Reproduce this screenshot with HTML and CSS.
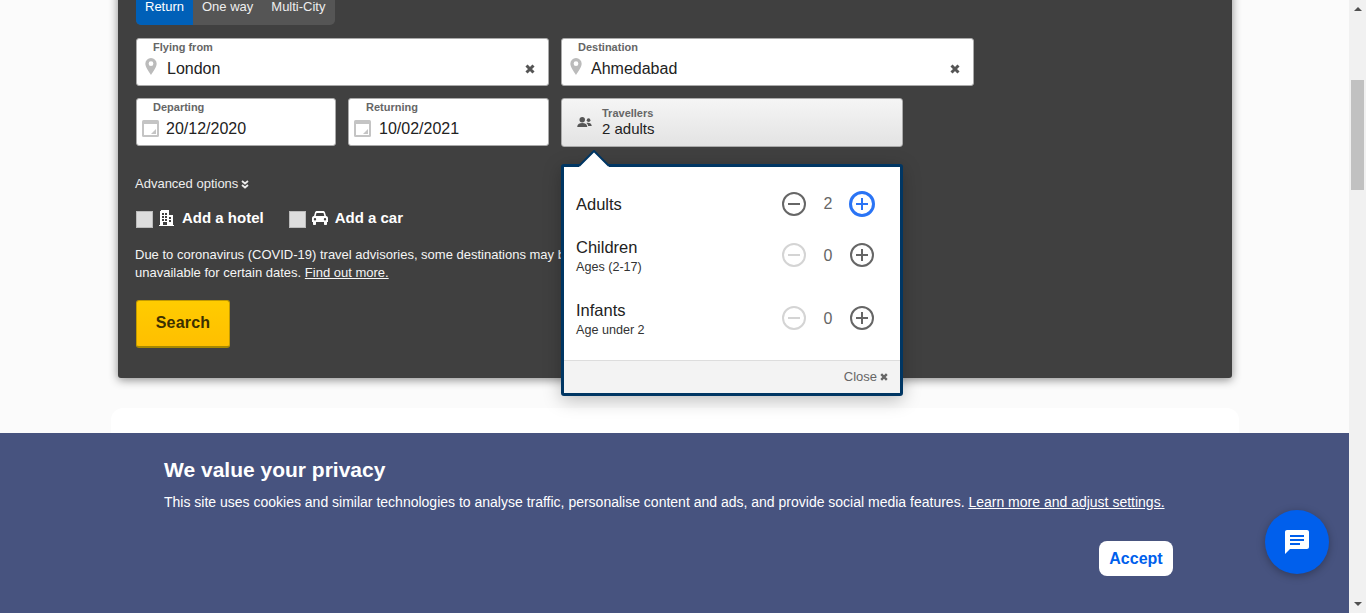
FILE: index.html
```html
<!DOCTYPE html>
<html lang="en">
<head>
    <meta charset="UTF-8">
    <title>Flight search</title>
    <link rel="stylesheet" href="styles.css">
</head>
<body>
    <div class="page">
        <div class="main">
            <form class="panel">
                <div class="tabs">
                    <span class="tab selected">Return</span>
                    <span class="tab">One way</span>
                    <span class="tab">Multi-City</span>
                </div>
                <div class="fields">
                    <div class="field">
                        <label>Flying from</label>
                        <div class="value">
                            <svg class="pin" viewBox="0 0 12 18"><path fill="#bbb" fill-rule="evenodd" d="M6 0a6 6 0 0 0-6 6c0 3.500 4 8.500 6 12 2-3.500 6-8.500 6-12a6 6 0 0 0-6-6zm0 3.500a2.500 2.500 0 1 1 0 5 2.500 2.500 0 0 1 0-5z"/></svg>
                            <span class="text">London</span>
                            <svg class="clear" viewBox="0 0 10 10"><path stroke="#555" stroke-width="3" d="M1.500 1.500l7 7M8.500 1.500l-7 7"/></svg>
                        </div>
                    </div>
                    <div class="field">
                        <label>Destination</label>
                        <div class="value">
                            <svg class="pin" viewBox="0 0 12 18"><path fill="#bbb" fill-rule="evenodd" d="M6 0a6 6 0 0 0-6 6c0 3.500 4 8.500 6 12 2-3.500 6-8.500 6-12a6 6 0 0 0-6-6zm0 3.500a2.500 2.500 0 1 1 0 5 2.500 2.500 0 0 1 0-5z"/></svg>
                            <span class="text dest">Ahmedabad</span>
                            <svg class="clear" viewBox="0 0 10 10"><path stroke="#555" stroke-width="3" d="M1.500 1.500l7 7M8.500 1.500l-7 7"/></svg>
                        </div>
                    </div>
                    <div class="dates">
                        <div class="field">
                            <label>Departing</label>
                            <div class="value">
                                <svg class="cal" viewBox="0 0 17 17"><rect width="17" height="17" rx="1.500" fill="#c4c4c4"/><rect x="2" y="4" width="13" height="11" fill="#fff"/><path fill="#c4c4c4" d="M14 9v5H9z"/></svg>
                                <span class="text">20/12/2020</span>
                            </div>
                        </div>
                        <div class="field">
                            <label>Returning</label>
                            <div class="value">
                                <svg class="cal" viewBox="0 0 17 17"><rect width="17" height="17" rx="1.500" fill="#c4c4c4"/><rect x="2" y="4" width="13" height="11" fill="#fff"/><path fill="#c4c4c4" d="M14 9v5H9z"/></svg>
                                <span class="text">10/02/2021</span>
                            </div>
                        </div>
                    </div>
                    <div class="travellers">
                        <svg class="users" viewBox="0 0 16 11"><circle cx="5.500" cy="3" r="3" fill="#555"/><path fill="#555" d="M0 11c0-3 2-4.500 5.500-4.500S11 8 11 11z"/><circle cx="12.500" cy="3.500" r="2" fill="#555"/><path fill="#555" d="M10 6.500c3-.7 6 .5 6 3.500h-4c0-1.500-1-2.700-2-3.500z"/></svg>
                        <div>
                            <label>Travellers</label>
                            <div class="text">2 adults</div>
                        </div>
                        <div class="popup">
                            <svg class="arrow" viewBox="0 0 36 18"><path fill="#fff" d="M3 18v-2L18 1l15 15v2z"/><path fill="none" stroke="#003663" stroke-width="2" d="M3 16L18 1l15 15"/></svg>
                            <div class="rows">
                                <div class="row adults">
                                    <div class="who"><div class="name">Adults</div></div>
                                    <span class="step"><svg viewBox="0 0 24 24"><circle cx="12" cy="12" r="11" fill="none" stroke="#666" stroke-width="2"/><path stroke="#666" stroke-width="2" d="M6 12h12"/></svg></span>
                                    <span class="count">2</span>
                                    <span class="step focus"><svg viewBox="0 0 26 26"><circle cx="13" cy="13" r="11.500" fill="none" stroke="#2a74f5" stroke-width="3"/><path stroke="#2a74f5" stroke-width="2" d="M7 13h12M13 7v12"/></svg></span>
                                </div>
                                <div class="row">
                                    <div class="who"><div class="name">Children</div><div class="sub">Ages (2-17)</div></div>
                                    <span class="step"><svg viewBox="0 0 24 24"><circle cx="12" cy="12" r="11" fill="none" stroke="#d4d4d4" stroke-width="2"/><path stroke="#d4d4d4" stroke-width="2" d="M6 12h12"/></svg></span>
                                    <span class="count">0</span>
                                    <span class="step"><svg viewBox="0 0 24 24"><circle cx="12" cy="12" r="11" fill="none" stroke="#666" stroke-width="2"/><path stroke="#666" stroke-width="2" d="M6 12h12M12 6v12"/></svg></span>
                                </div>
                                <div class="row">
                                    <div class="who"><div class="name">Infants</div><div class="sub">Age under 2</div></div>
                                    <span class="step"><svg viewBox="0 0 24 24"><circle cx="12" cy="12" r="11" fill="none" stroke="#d4d4d4" stroke-width="2"/><path stroke="#d4d4d4" stroke-width="2" d="M6 12h12"/></svg></span>
                                    <span class="count">0</span>
                                    <span class="step"><svg viewBox="0 0 24 24"><circle cx="12" cy="12" r="11" fill="none" stroke="#666" stroke-width="2"/><path stroke="#666" stroke-width="2" d="M6 12h12M12 6v12"/></svg></span>
                                </div>
                            </div>
                            <div class="popup-foot">
                                Close
                                <svg class="close-x" viewBox="0 0 10 10"><path stroke="#666" stroke-width="3" d="M1.500 1.500l7 7M8.500 1.500l-7 7"/></svg>
                            </div>
                        </div>
                    </div>
                </div>
                <div class="advanced">
                    Advanced options
                    <svg class="chev" viewBox="0 0 8 9"><path fill="none" stroke="#eee" stroke-width="1.800" d="M1 1l3 2.500L7 1M1 5l3 2.500L7 5"/></svg>
                </div>
                <div class="extras">
                    <div class="extra">
                        <span class="check"></span>
                        <svg class="hotel" viewBox="0 0 15 16"><path fill="#fff" fill-rule="evenodd" d="M2 0h8v5h4v10h1v1H0v-1h1V1h1zm1 3v2h2V3zm3 0v2h2V3zM3 6v2h2V6zm3 0v2h2V6zm4 1v2h2V7zM3 9v2h2V9zm3 0v2h2V9zm4 1v2h2v-2zM4 12v3h4v-3z"/></svg>
                        <span>Add a hotel</span>
                    </div>
                    <div class="extra">
                        <span class="check"></span>
                        <svg class="car" viewBox="0 0 16 14"><path fill="#fff" fill-rule="evenodd" d="M3 1.500C3.300.5 4 0 5 0h6c1 0 1.700.5 2 1.500L14 5c1.300.3 2 1.200 2 2.500V11h-1v2c0 .6-.4 1-1 1h-1c-.6 0-1-.4-1-1v-2H4v2c0 .6-.4 1-1 1H2c-.6 0-1-.4-1-1v-2H0V7.500C0 6.200.7 5.300 2 5zM4.500 2L3.700 5h8.600l-.8-3zM3 7a1.200 1.200 0 1 0 0 2.400A1.200 1.200 0 0 0 3 7zm10 0a1.200 1.200 0 1 0 0 2.400A1.200 1.200 0 0 0 13 7z"/></svg>
                        <span>Add a car</span>
                    </div>
                </div>
                <p class="notice">Due to coronavirus (COVID-19) travel advisories, some destinations may be<br>unavailable for certain dates. <a href="#">Find out more.</a></p>
                <button class="search" type="button">Search</button>
            </form>
            <div class="card"></div>
            <div class="cookie">
                <h2>We value your privacy</h2>
                <p>This site uses cookies and similar technologies to analyse traffic, personalise content and ads, and provide social media features. <a href="#">Learn more and adjust settings.</a></p>
                <button class="accept" type="button">Accept</button>
            </div>
            <div class="chat">
                <svg viewBox="0 0 26 26"><path fill="#fff" d="M3 1h20c1.100 0 2 .9 2 2v15c0 1.100-.9 2-2 2H6l-5 5V3c0-1.100.9-2 2-2z"/><path fill="#005fec" d="M6 6h14v2H6zM6 10h14v2H6zM6 14h10v2H6z"/></svg>
            </div>
        </div>
        <div class="scrollbar">
            <span class="up"></span>
            <span class="thumb"></span>
            <span class="down"></span>
        </div>
    </div>
</body>
</html>
```

FILE: styles.css
```css
*{
    padding: 0;
    margin: 0;
    box-sizing: border-box;
}
body{
    font-family: "Liberation Sans", Arial, sans-serif;
    height: 613px;
    overflow: hidden;
    background: #fbfbfb;
}
a{
    color: inherit;
}
.page{
    display: flex;
    height: 613px;
}
.main{
    flex: 1;
    position: relative;
    overflow: hidden;
}

/* dark search panel */
.panel{
    margin: -30px 117px 30px 118px;
    padding: 25px 18px 30px;
    height: 408px;
    background: #404040;
    border-radius: 0 0 3px 3px;
    box-shadow: 0 2px 10px rgba(0,0,0,.45);
    color: #fff;
}
.tabs{
    display: inline-flex;
    height: 30px;
    padding-right: 1px;
    background: #555;
    border-radius: 0 0 5px 5px;
    color: #eee;
    font-size: 13px;
    line-height: 24px;
    vertical-align: top;
}
.tab{
    padding: 0 9px;
}
.tab.selected{
    width: 57px;
    background: #0060b8;
    border-radius: 0 0 0 5px;
    color: #fff;
}
.fields{
    display: grid;
    grid-template-columns: 413px 413px;
    gap: 12px;
    margin-top: 13px;
    align-items: start;
}
.dates{
    display: flex;
    gap: 12px;
}
.dates .field:first-child{
    width: 200px;
}
.dates .field:last-child{
    width: 201px;
    padding-left: 9px;
}
.dates .field:last-child .cal{
    margin-left: -4px;
    margin-right: 8px;
}
.field{
    height: 48px;
    padding: 2px 13px 0 8px;
    background: #fff;
    border: 1px solid #aaa;
    border-radius: 3px;
    color: #222;
}
label{
    display: block;
    font-size: 11px;
    font-weight: bold;
    line-height: 13px;
    color: #666;
}
.field label{
    padding-left: 8px;
}
.value{
    display: flex;
    align-items: center;
    height: 26px;
    margin-top: 2px;
}
.text{
    font-size: 16px;
    line-height: 20px;
    color: #222;
}
.dest{
    margin-left: -1px;
}
.pin{
    width: 12px;
    height: 17px;
    margin-right: 10px;
    margin-top: -5px;
}
.clear{
    width: 10px;
    height: 10px;
    margin-left: auto;
}
.value .cal{
    width: 17px;
    height: 17px;
    margin: -2px 7px 0 -3px;
}

/* travellers dropdown */
.travellers{
    position: relative;
    display: flex;
    align-items: center;
    width: 342px;
    height: 49px;
    padding: 0 0 2px 15px;
    background: linear-gradient(#f5f5f5, #e3e3e3);
    border: 1px solid #aaa;
    border-radius: 3px;
}
.users{
    width: 15px;
    height: 10px;
    margin-right: 10px;
}
.travellers .text{
    font-size: 15px;
    line-height: 17px;
}
.popup{
    position: absolute;
    left: -1px;
    top: 65px;
    width: 342px;
    height: 232px;
    background: #fff;
    border: 3px solid #003663;
    border-radius: 3px;
    box-shadow: 0 4px 18px rgba(0,0,0,.25);
    color: #222;
}
.arrow{
    position: absolute;
    left: 12px;
    top: -17px;
    width: 36px;
    height: 18px;
}
.rows{
    height: 193px;
    padding: 23px 0 0 12px;
}
.row{
    display: flex;
    align-items: flex-start;
    height: 40px;
    margin-bottom: 23px;
}
.row .step{
    margin-top: 6px;
}
.row.adults{
    align-items: center;
    height: 28px;
    margin-bottom: 19px;
}
.row.adults .step{
    margin-top: 0;
}
.who{
    width: 206px;
}
.name{
    font-size: 16.5px;
    line-height: 20px;
    color: #222;
}
.sub{
    font-size: 12.6px;
    line-height: 20px;
    color: #333;
}
.step{
    display: flex;
    justify-content: center;
    align-items: center;
    width: 24px;
    height: 24px;
}
.step svg{
    width: 24px;
    height: 24px;
    flex: none;
}
.step.focus svg{
    width: 26px;
    height: 26px;
}
.count{
    width: 44px;
    margin-top: 6px;
    line-height: 26px;
    text-align: center;
    font-size: 16px;
    color: #666;
}
.adults .count{
    margin-top: 0;
}
.popup-foot{
    display: flex;
    justify-content: flex-end;
    align-items: center;
    height: 33px;
    padding: 0 12px 2px 0;
    background: #f3f3f3;
    border-top: 1px solid #ddd;
    font-size: 13px;
    color: #666;
}
.close-x{
    width: 8px;
    height: 8px;
    margin: 2px 0 0 3px;
}

/* below the fields */
.advanced{
    display: flex;
    align-items: center;
    margin: 28px 0 0 -1px;
    font-size: 13px;
    line-height: 18px;
    color: #eee;
}
.chev{
    width: 8px;
    height: 9px;
    margin-left: 3px;
}
.extras{
    display: flex;
    gap: 25px;
    margin-top: 14px;
    font-size: 15px;
    font-weight: bold;
}
.extra{
    display: flex;
    align-items: center;
    height: 20px;
}
.check{
    width: 17px;
    height: 17px;
    margin-top: 5px;
    background: #ddd;
    border: 1px solid #bbb;
}
.hotel{
    width: 15px;
    height: 16px;
    margin: 2px 8px 0 6px;
}
.car{
    width: 16px;
    height: 14px;
    margin: 2px 7px 0 6px;
}
.notice{
    margin: 19px 0 0 -1px;
    font-size: 13px;
    line-height: 18px;
    color: #f5f5f5;
    white-space: nowrap;
}
.search{
    display: block;
    width: 94px;
    height: 48px;
    margin-top: 18px;
    padding-bottom: 2px;
    background: linear-gradient(#ffcc00, #ffbf00);
    border: 1px solid #c39b00;
    border-bottom: 2px solid #a68800;
    border-radius: 3px;
    font: bold 16px "Liberation Sans", Arial, sans-serif;
    letter-spacing: .2px;
    color: #3b3000;
}
.card{
    height: 205px;
    margin: 0 110px 0 111px;
    background: #fff;
    border-radius: 12px 12px 0 0;
}

/* fixed bits on top */
.cookie{
    position: absolute;
    left: 0;
    right: 0;
    bottom: 0;
    height: 180px;
    display: flex;
    flex-direction: column;
    padding: 25px 176px 0 164px;
    background: #47537f;
    color: #fff;
}
.cookie h2{
    font-size: 21px;
    line-height: 24px;
}
.cookie p{
    margin-top: 10px;
    font-size: 14px;
    line-height: 20px;
    white-space: nowrap;
}
.accept{
    align-self: flex-end;
    width: 74px;
    height: 35px;
    margin-top: 29px;
    background: #fff;
    border: 0;
    border-radius: 8px;
    font: bold 16px "Liberation Sans", Arial, sans-serif;
    color: #005fec;
}
.chat{
    position: absolute;
    left: 1265px;
    top: 510px;
    width: 64px;
    height: 64px;
    display: flex;
    justify-content: center;
    align-items: center;
    background: #005fec;
    border-radius: 50%;
    box-shadow: 0 2px 8px rgba(0,0,0,.3);
}
.chat svg{
    width: 26px;
    height: 26px;
}

/* fake scrollbar */
.scrollbar{
    width: 17px;
    display: flex;
    flex-direction: column;
    align-items: center;
    background: #f1f1f1;
}
.up{
    margin-top: 7px;
    border: 4px solid transparent;
    border-top: 0;
    border-bottom: 4px solid #505050;
    width: 8px;
}
.thumb{
    width: 13px;
    height: 110px;
    margin-top: 69px;
    background: #c1c1c1;
}
.down{
    margin-top: auto;
    margin-bottom: 7px;
    border: 4px solid transparent;
    border-bottom: 0;
    border-top: 4px solid #505050;
    width: 8px;
}
```
